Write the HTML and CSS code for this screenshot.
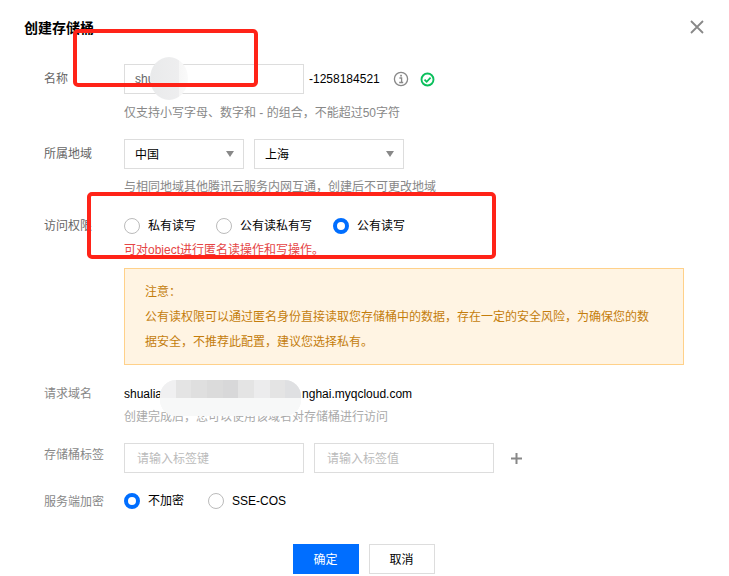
FILE: index.html
```html
<!DOCTYPE html>
<html lang="zh-CN">
<head>
<meta charset="utf-8">
<title>创建存储桶</title>
<link rel="stylesheet" href="styles.css">
</head>
<body>
<div class="dialog">
  <header class="head">
    <h1 class="title">创建存储桶</h1>
    <svg class="close" viewBox="0 0 14 14" width="14" height="14"><path d="M1 1l12 12M13 1L1 13" stroke="#888" stroke-width="1.8" fill="none"/></svg>
  </header>

  <div class="row row-name">
    <div class="label">名称</div>
    <div class="body">
      <div class="inline">
        <div class="field"><span class="val">shu</span></div>
        <span class="suffix">-1258184521</span>
        <svg class="ico-info" viewBox="0 0 16 16" width="16" height="16"><circle cx="8" cy="8" r="6.6" fill="none" stroke="#888" stroke-width="1.3"/><rect x="7.2" y="3.8" width="1.7" height="1.7" fill="#888"/><path d="M6.4 7h2.2v4.2M6.2 11.5h4" stroke="#888" stroke-width="1.3" fill="none"/></svg>
        <svg class="ico-ok" viewBox="0 0 16 16" width="15" height="15"><circle cx="8" cy="8" r="6.4" fill="none" stroke="#0abf5b" stroke-width="2"/><path d="M4.8 8.2l2.3 2.3 4.2-4.4" stroke="#0abf5b" stroke-width="1.9" fill="none"/></svg>
      </div>
      <p class="hint">仅支持小写字母、数字和 - 的组合，不能超过50字符</p>
    </div>
  </div>

  <div class="row row-region">
    <div class="label">所属地域</div>
    <div class="body">
      <div class="inline gap10">
        <div class="select sel-a"><span>中国</span><i class="caret"></i></div>
        <div class="select sel-b"><span>上海</span><i class="caret"></i></div>
      </div>
      <p class="hint">与相同地域其他腾讯云服务内网互通，创建后不可更改地域</p>
    </div>
  </div>

  <div class="row row-access">
    <div class="label">访问权限</div>
    <div class="body">
      <div class="radios">
        <span class="radio r1"><i class="dot"></i>私有读写</span>
        <span class="radio r2"><i class="dot"></i>公有读私有写</span>
        <span class="radio"><i class="dot on"></i>公有读写</span>
      </div>
      <p class="warn">可对object进行匿名读操作和写操作。</p>
      <div class="note">
        <p>注意：</p>
        <p>公有读权限可以通过匿名身份直接读取您存储桶中的数据，存在一定的安全风险，为确保您的数<br>据安全，不推荐此配置，建议您选择私有。</p>
      </div>
    </div>
  </div>

  <div class="row row-domain">
    <div class="label">请求域名</div>
    <div class="body">
      <div class="domain">shualia<span class="gap"></span>nghai.myqcloud.com</div>
      <p class="hint hint-tight">创建完成后，您可以使用该域名对存储桶进行访问</p>
    </div>
  </div>

  <div class="row row-tags">
    <div class="label">存储桶标签</div>
    <div class="body inline gap10">
      <div class="field ph">请输入标签键</div>
      <div class="field ph">请输入标签值</div>
      <svg class="plus" viewBox="0 0 11 11" width="11" height="11"><path d="M5.5 0v11M0 5.5h11" stroke="#888" stroke-width="2"/></svg>
    </div>
  </div>

  <div class="row row-enc">
    <div class="label">服务端加密</div>
    <div class="body radios radios-enc">
      <span class="radio r3"><i class="dot on"></i>不加密</span>
      <span class="radio"><i class="dot"></i>SSE-COS</span>
    </div>
  </div>

  <footer class="foot">
    <button class="btn primary">确定</button>
    <button class="btn">取消</button>
  </footer>
</div>

<div class="smudge smudge-name"></div>
<div class="smudge-grid">
  <i></i><i class="c2"></i><i class="c3"></i><i class="c4"></i><i class="c5"></i><i class="c6"></i><i class="c7"></i><i class="c8"></i><i class="c9"></i>
  <i class="l"></i><i class="l"></i><i class="l"></i><i class="l"></i><i class="l"></i><i class="l"></i><i class="l"></i><i class="l"></i><i class="l"></i>
</div>
<div class="mark mark-a"></div>
<div class="mark mark-b"></div>
</body>
</html>
```
FILE: styles.css
```css
* { box-sizing: border-box; }
html, body { margin: 0; padding: 0; background: #fff; }
body {
  width: 729px;
  height: 576px;
  overflow: hidden;
  position: relative;
  font: 12px/18px "Liberation Sans", "Noto Sans CJK SC", sans-serif;
  color: #000;
}
p { margin: 0; }
.dialog { padding: 18px 24px 0 24px; }
.head { display: flex; justify-content: space-between; align-items: center; height: 20px; }
.title { margin: 0; font-size: 14px; font-weight: 700; line-height: 20px; color: #000; }
.close { margin: -2px 1px 0 0; }

.row { display: flex; padding-left: 20px; }
.label { width: 80px; flex: none; color: #666; line-height: 18px; }
.body { flex: none; width: 560px; }
.inline { display: flex; align-items: center; }
.gap10 { gap: 10px; }

.row-name { margin-top: 26px; }
.row-name .label { padding-top: 6px; }
.field {
  width: 180px; height: 30px; border: 1px solid #ddd;
  padding: 0 10px; line-height: 28px; flex: none;
}
.val { color: #666; }
.ph { color: #bbb; padding: 1px 12px 0; }
.suffix { margin-left: 5px; }
.ico-info { margin-left: 13px; }
.ico-ok { margin-left: 11px; }
.hint { color: #888; margin-top: 10px; line-height: 18px; }
.hint-tight { margin-top: 5px; }

.row-region { margin-top: 17px; }
.row-region .label { padding-top: 6px; }
.select {
  height: 30px; border: 1px solid #ddd; padding: 2px 10px 0;
  display: flex; align-items: center; justify-content: space-between;
}
.sel-a { width: 120px; }
.sel-b { width: 150px; }
.caret {
  width: 0; height: 0; margin: -2px -1px 0 0;
  border-left: 4.5px solid transparent; border-right: 4.5px solid transparent;
  border-top: 6px solid #888;
}
.row-region .hint { margin-top: 9px; }

.row-access { margin-top: 21px; }
.row-access .label { padding-top: 0; }
.radios { display: flex; align-items: center; height: 18px; margin-top: 0; }
.radio { display: flex; align-items: center; }
.dot {
  width: 16px; height: 16px; border-radius: 50%; border: 1px solid #bbb;
  margin-right: 8px; flex: none; background: #fff;
}
.dot.on { border: 4px solid #006eff; }
.r1 { margin-right: 20px; }
.r2 { margin-right: 21px; }
.warn { color: #e54545; margin-top: 6px; }
.note {
  margin-top: 9px; width: 560px; height: 97px;
  background: #fff4e3; border: 1px solid #ffd18a;
  padding: 11px 20px; color: #c47d0c; line-height: 25px;
}

.row-domain { margin-top: 20px; }
.row-domain .label { padding-top: 0; }
.domain { line-height: 18px; }
.gap { display: inline-block; width: 140px; }
.row-domain .hint { color: #aaa; }
.row-domain .label { color: #888; }

.row-tags { margin-top: 17px; }
.row-tags .label { padding-top: 3px; color: #888; }
.row-tags .body { align-items: flex-start; }
.plus { margin: 10px 0 0 7px; }

.row-enc { margin-top: 19px; }
.row-enc .label { color: #888; padding-top: 1px; }
.radios-enc { margin-top: 0; }
.r3 { margin-right: 24px; }

.foot { display: flex; justify-content: center; gap: 10px; margin-top: 33px; padding-right: 2px; }
.btn {
  width: 66px; height: 30px; border: 1px solid #ddd; background: #fff; color: #000;
  font: inherit; padding: 1px 0 0;
}
.btn.primary { background: #006eff; border-color: #006eff; color: #fff; }

/* Screenshot annotations lying over the form */
.smudge { position: absolute; }
.smudge-name {
  left: 150px; top: 57px; width: 38px; height: 43px; border-radius: 50%;
  background: linear-gradient(90deg, #e9eaeb 0, #eeeeef 76%, #f6f6f6 76%, #fafafa 100%);
}
.smudge-grid {
  position: absolute; left: 160px; top: 380px; width: 141px; height: 36px;
  display: grid; grid-template-columns: repeat(9, 1fr); grid-template-rows: 1fr 1fr;
  border-radius: 16px; overflow: hidden; background: #f6f7f7;
}
.smudge-grid i { background: #f0f0f1; }
.smudge-grid .c2 { background: #e4e4e4; }
.smudge-grid .c3 { background: #dfdfdf; }
.smudge-grid .c4 { background: #dbdbdb; }
.smudge-grid .c5 { background: #d8d8d9; }
.smudge-grid .c6 { background: #e4e4e4; }
.smudge-grid .c7 { background: #ececed; }
.smudge-grid .c8 { background: #e4e4e4; }
.smudge-grid .c9 { background: #dfe0e2; }
.smudge-grid .l { background: #f7f8f8; }
.mark { position: absolute; border: 4px solid #ff2318; border-radius: 5px; }
.mark-a { left: 73px; top: 29px; width: 185px; height: 58px; }
.mark-b { left: 87px; top: 192px; width: 409px; height: 67px; }
```
